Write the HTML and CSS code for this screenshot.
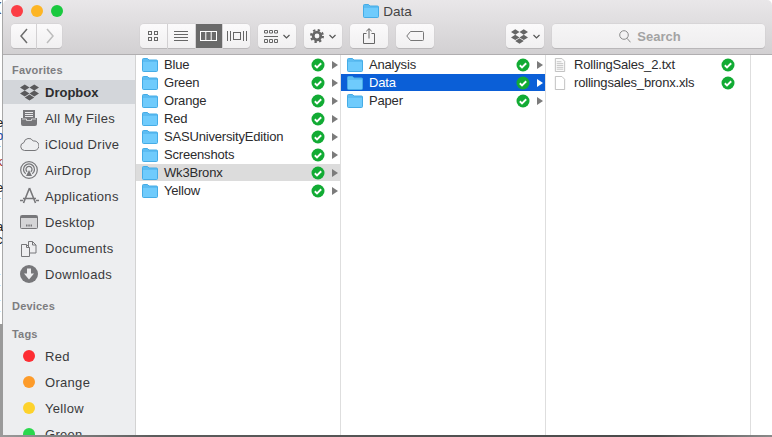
FILE: index.html
```html
<!DOCTYPE html>
<html lang="en">
<head>
    <meta charset="UTF-8">
    <title>Data</title>
    <link rel="stylesheet" href="styles.css">
</head>
<body>
    <svg class="sprite">
        <symbol id="folder" viewBox="0 0 16 14">
            <path d="M.5 12V1.500a1 1 0 0 1 1-1h4l1.500 1.500h7.500a1 1 0 0 1 1 1V12.500a1 1 0 0 1-1 1h-13a1 1 0 0 1-1-1z" fill="#5cbcf2" stroke="#45ace6"/>
            <path d="M1 4h14v8.500a.5.5 0 0 1-.5.5h-13a.5.5 0 0 1-.5-.5z" fill="#6fcbfc"/>
        </symbol>
        <symbol id="check" viewBox="0 0 14 14">
            <circle cx="7" cy="7" r="6.500" fill="#12ab34"/>
            <path d="M3.800 7.300l2.200 2.100 4.200-4.100" fill="none" stroke="#fff" stroke-width="1.900"/>
        </symbol>
        <symbol id="dropbox" viewBox="0 0 24 24">
            <path d="M6 1.800L0 5.600l6 3.800 6-3.800zM18 1.800l-6 3.800 6 3.800 6-3.800zM0 13.300l6 3.800 6-3.800-6-3.800zM18 9.500l-6 3.800 6 3.800 6-3.800zM6 18.400l6 3.800 6-3.800-6-3.800z"/>
        </symbol>
    </svg>

    <div class="desk">
        <div class="behind">
            <div class="frag-top">(</div>
            <div class="frags">
                <span>e</span>
                <span class="frag-blue">b</span>
                <span>r</span>
                <span class="frag-red">k</span>
                <span>&nbsp;</span>
                <span>e</span>
                <span>r</span>
                <span class="frag-red">t</span>
                <span>a</span>
                <span>c</span>
                <span>&nbsp;</span>
                <span class="frag-blue">l</span>
                <span>(</span>
                <span>&nbsp;</span>
                <span>(</span>
                <span class="frag-red">t</span>
            </div>
            <div class="behind-shade"></div>
        </div>

        <div class="window">
            <div class="titlebar">
                <div class="lights">
                    <i class="light close"></i>
                    <i class="light min"></i>
                    <i class="light max"></i>
                </div>
                <div class="title">
                    <svg class="title-folder"><use href="#folder"/></svg>
                    <span>Data</span>
                </div>
                <div class="toolbar">
                    <div class="group nav">
                        <button class="btn seg">
                            <svg width="10" height="16" viewBox="0 0 10 16"><path d="M8 1L2 8l6 7" fill="none" stroke="#6c6c6c" stroke-width="1.500"/></svg>
                        </button>
                        <button class="btn seg">
                            <svg width="10" height="16" viewBox="0 0 10 16"><path d="M2 1l6 7-6 7" fill="none" stroke="#bdbdbd" stroke-width="1.500"/></svg>
                        </button>
                    </div>
                    <div class="group views">
                        <button class="btn seg">
                            <svg width="12" height="12" viewBox="0 0 12 12" fill="none" stroke="#666"><rect x="1.500" y="1.500" width="3" height="3"/><rect x="7.500" y="1.500" width="3" height="3"/><rect x="1.500" y="7.500" width="3" height="3"/><rect x="7.500" y="7.500" width="3" height="3"/></svg>
                        </button>
                        <button class="btn seg">
                            <svg width="16" height="12" viewBox="0 0 16 12" stroke="#666"><path d="M1 1.500h14M1 4.500h14M1 7.500h14M1 10.500h14"/></svg>
                        </button>
                        <button class="btn seg on">
                            <svg width="17" height="12" viewBox="0 0 17 12" fill="none" stroke="#fff"><rect x=".5" y="1.500" width="16" height="9"/><path d="M5.800 1.500v9M11.200 1.500v9"/></svg>
                        </button>
                        <button class="btn seg">
                            <svg width="20" height="12" viewBox="0 0 20 12" fill="none" stroke="#666"><rect x="6.500" y="2.500" width="7" height="7"/><path d="M.5 1v10M3.500 1v10M16.500 1v10M19.500 1v10"/></svg>
                        </button>
                    </div>
                    <button class="btn wide arrange">
                        <svg width="14" height="13" viewBox="0 0 14 13" fill="none" stroke="#666"><path d="M.5 .5h3v2.500h-3zM5.500 .5h3v2.500h-3zM10.500 .5h3v2.500h-3zM0 6.500h14M.5 9.500h3v3h-3zM5.500 9.500h3v3h-3zM10.500 9.500h3v3h-3z"/></svg>
                        <svg class="chev" width="7" height="5" viewBox="0 0 7 5"><path d="M.5 1l3 3 3-3" fill="none" stroke="#555" stroke-width="1.200"/></svg>
                    </button>
                    <button class="btn wide">
                        <svg width="14" height="14" viewBox="0 0 14 14"><circle cx="7" cy="7" r="3.800" fill="none" stroke="#666" stroke-width="2.800"/><circle cx="7" cy="7" r="5.900" fill="none" stroke="#666" stroke-width="2.200" stroke-dasharray="2.300 2.330"/></svg>
                        <svg class="chev" width="7" height="5" viewBox="0 0 7 5"><path d="M.5 1l3 3 3-3" fill="none" stroke="#555" stroke-width="1.200"/></svg>
                    </button>
                    <button class="btn wide">
                        <svg width="12" height="16" viewBox="0 0 12 16" fill="none" stroke="#666"><path d="M3.500 5.500h-3v10h11v-10h-3M6 10.500V.8M3.300 3.200L6 .7l2.700 2.500"/></svg>
                    </button>
                    <button class="btn wide">
                        <svg width="18" height="10" viewBox="0 0 18 10" fill="none" stroke="#777"><path d="M.8 5L4.500.5h12a1 1 0 0 1 1 1v7a1 1 0 0 1-1 1h-12z"/></svg>
                    </button>
                    <button class="btn wide dbx">
                        <svg width="17" height="17" fill="#666"><use href="#dropbox"/></svg>
                        <svg class="chev" width="7" height="5" viewBox="0 0 7 5"><path d="M.5 1l3 3 3-3" fill="none" stroke="#555" stroke-width="1.200"/></svg>
                    </button>
                    <div class="search">
                        <svg width="12" height="13" viewBox="0 0 12 13" fill="none" stroke="#8b8b8b"><circle cx="5" cy="5" r="4.300"/><path d="M8 8.300l3.500 4"/></svg>
                        <span>Search</span>
                    </div>
                </div>
            </div>

            <div class="content">
                <div class="sidebar">
                    <div class="side-head">Favorites</div>
                    <div class="side-item active">
                        <span class="side-icon"><svg width="19" height="19" fill="#59595b"><use href="#dropbox"/></svg></span>
                        <span>Dropbox</span>
                    </div>
                    <div class="side-item">
                        <span class="side-icon">
                            <svg width="16" height="16" viewBox="0 0 16 16"><path d="M2 0h12v8h2v6a2 2 0 0 1-2 2H2a2 2 0 0 1-2-2V8h2z" fill="#77777a"/><path d="M4 2.500h8M4 4.500h8M4 6.500h8" stroke="#e8e8ea"/><path d="M1 9h4.500v1.500h5V9H15" stroke="#e8e8ea" fill="none" stroke-width=".8"/></svg>
                        </span>
                        <span>All My Files</span>
                    </div>
                    <div class="side-item">
                        <span class="side-icon">
                            <svg width="19" height="13" viewBox="0 0 19 13"><path d="M4.500 12.500a4 4 0 0 1-.6-7.900A5 5 0 0 1 13.200 3a4.800 4.800 0 0 1 1.800 9.500z" fill="none" stroke="#77777a"/></svg>
                        </span>
                        <span>iCloud Drive</span>
                    </div>
                    <div class="side-item">
                        <span class="side-icon">
                            <svg width="18" height="18" viewBox="0 0 18 18" fill="none" stroke="#77777a"><circle cx="9" cy="9" r="8.300" stroke-width="1.200"/><path d="M5.700 12.800a5.500 5.500 0 1 1 6.600 0M7.200 10.800a3 3 0 1 1 3.600 0" stroke-width="1.300"/><path d="M9 9l3 6H6z" fill="#77777a" stroke="none"/></svg>
                        </span>
                        <span>AirDrop</span>
                    </div>
                    <div class="side-item">
                        <span class="side-icon">
                            <svg width="19" height="18" viewBox="0 0 19 18" fill="none" stroke="#77777a" stroke-width="1.600"><path d="M9.500 1L3.500 16M9.500 1l6 15M3 11.500h13M0 13.500h3M16 13.500h3"/></svg>
                        </span>
                        <span>Applications</span>
                    </div>
                    <div class="side-item">
                        <span class="side-icon">
                            <svg width="18" height="14" viewBox="0 0 18 14"><rect x=".5" y=".5" width="17" height="13" rx="1" fill="#d5d5d7" stroke="#77777a"/><rect x="1" y="1" width="16" height="2" fill="#77777a"/><path d="M6 10.500h6" stroke="#77777a" stroke-width="2" stroke-dasharray="1.500 .8"/></svg>
                        </span>
                        <span>Desktop</span>
                    </div>
                    <div class="side-item">
                        <span class="side-icon">
                            <svg width="16" height="17" viewBox="0 0 16 17" fill="#eeeef0" stroke="#77777a"><path d="M7.500 1.500h4l3.500 3.500v8h-7.500z"/><path d="M.5 4.500h5l3 3v9h-8z"/><path d="M5.500 4.500v3h3M11.500 1.500v3.500h3.500" fill="none"/></svg>
                        </span>
                        <span>Documents</span>
                    </div>
                    <div class="side-item">
                        <span class="side-icon">
                            <svg width="18" height="18" viewBox="0 0 18 18"><circle cx="9" cy="9" r="9" fill="#77777a"/><path d="M7 3.500h4v5h3l-5 6-5-6h3z" fill="#eeeef0"/></svg>
                        </span>
                        <span>Downloads</span>
                    </div>

                    <div class="side-head devices">Devices</div>
                    <div class="side-head tags">Tags</div>
                    <div class="side-item">
                        <span class="side-icon"><i class="dot red"></i></span>
                        <span>Red</span>
                    </div>
                    <div class="side-item">
                        <span class="side-icon"><i class="dot orange"></i></span>
                        <span>Orange</span>
                    </div>
                    <div class="side-item">
                        <span class="side-icon"><i class="dot yellow"></i></span>
                        <span>Yellow</span>
                    </div>
                    <div class="side-item">
                        <span class="side-icon"><i class="dot green"></i></span>
                        <span>Green</span>
                    </div>
                </div>

                <div class="col">
                    <div class="row"><svg class="icon"><use href="#folder"/></svg><span class="name">Blue</span><svg class="ok"><use href="#check"/></svg><i class="arrow"></i></div>
                    <div class="row"><svg class="icon"><use href="#folder"/></svg><span class="name">Green</span><svg class="ok"><use href="#check"/></svg><i class="arrow"></i></div>
                    <div class="row"><svg class="icon"><use href="#folder"/></svg><span class="name">Orange</span><svg class="ok"><use href="#check"/></svg><i class="arrow"></i></div>
                    <div class="row"><svg class="icon"><use href="#folder"/></svg><span class="name">Red</span><svg class="ok"><use href="#check"/></svg><i class="arrow"></i></div>
                    <div class="row"><svg class="icon"><use href="#folder"/></svg><span class="name">SASUniversityEdition</span><svg class="ok"><use href="#check"/></svg><i class="arrow"></i></div>
                    <div class="row"><svg class="icon"><use href="#folder"/></svg><span class="name">Screenshots</span><svg class="ok"><use href="#check"/></svg><i class="arrow"></i></div>
                    <div class="row path"><svg class="icon"><use href="#folder"/></svg><span class="name">Wk3Bronx</span><svg class="ok"><use href="#check"/></svg><i class="arrow"></i></div>
                    <div class="row"><svg class="icon"><use href="#folder"/></svg><span class="name">Yellow</span><svg class="ok"><use href="#check"/></svg><i class="arrow"></i></div>
                </div>

                <div class="col">
                    <div class="row"><svg class="icon"><use href="#folder"/></svg><span class="name">Analysis</span><svg class="ok"><use href="#check"/></svg><i class="arrow"></i></div>
                    <div class="row selected"><svg class="icon"><use href="#folder"/></svg><span class="name">Data</span><svg class="ok"><use href="#check"/></svg><i class="arrow"></i></div>
                    <div class="row"><svg class="icon"><use href="#folder"/></svg><span class="name">Paper</span><svg class="ok"><use href="#check"/></svg><i class="arrow"></i></div>
                </div>

                <div class="col files">
                    <div class="row">
                        <svg class="icon" viewBox="0 0 16 15"><path d="M3 .5h7l3 3v11H3z" fill="#fafafa" stroke="#bcbcbc"/><path d="M4.500 4h5M4.500 6h7M4.500 8h7M4.500 10h7M4.500 12h7" stroke="#c4c4c4"/></svg>
                        <span class="name">RollingSales_2.txt</span><svg class="ok"><use href="#check"/></svg>
                    </div>
                    <div class="row">
                        <svg class="icon" viewBox="0 0 16 15"><path d="M3 .5h7l3 3v11H3z" fill="#fff" stroke="#bcbcbc"/></svg>
                        <span class="name">rollingsales_bronx.xls</span><svg class="ok"><use href="#check"/></svg>
                    </div>
                </div>

                <div class="col-blank"></div>
            </div>
        </div>
    </div>
    <div class="behind-bottom"></div>
</body>
</html>
```

FILE: styles.css
```css
*{
    margin: 0;
    padding: 0;
    box-sizing: border-box;
}
body{
    width: 772px;
    height: 437px;
    overflow: hidden;
    background: #fff;
    font-family: "Liberation Sans", Arial, sans-serif;
    font-size: 13px;
    color: #2b2b2d;
}
.sprite{
    display: none;
}
.desk{
    display: flex;
    height: 435px;
}

/* page behind the finder window */
.behind{
    width: 3px;
    display: flex;
    flex-direction: column;
    overflow: hidden;
    background: #fff;
    box-shadow: inset -1px 0 0 #a8a8a8;
    color: #222;
    line-height: 13px;
}
.frag-top{
    height: 116px;
    margin-left: -3px;
}
.frags{
    display: flex;
    flex-direction: column;
    height: 208px;
}
.frags span{
    display: block;
    height: 13px;
    margin-left: -4px;
}
.frags .frag-blue{
    color: #1f4fb0;
}
.frags .frag-red{
    color: #a52a1a;
}
.behind-shade{
    flex: 1;
    background: #9a9a9a;
}
.behind-bottom{
    height: 2px;
    background: linear-gradient(to right, #9a9a9a, #5c5c5c 20%, #4a4a4a 85%, #8a8a8a);
}

/* window */
.window{
    position: relative;
    flex: 1;
    min-width: 0;
    display: flex;
    flex-direction: column;
    border-radius: 5px 5px 0 0;
    overflow: hidden;
}
.titlebar{
    height: 55px;
    display: flex;
    flex-direction: column;
    background: linear-gradient(#e9e7e9, #d2d0d2);
    border-bottom: 1px solid #b0aeb0;
}
/* traffic lights sit over the titlebar */
.lights{
    display: flex;
    gap: 8px;
    position: absolute;
    left: 8px;
    top: 5px;
}
.light{
    width: 12px;
    height: 12px;
    border-radius: 50%;
}
.close{
    background: #fc3d45;
}
.min{
    background: #fdb524;
}
.max{
    background: #1ac93f;
}
.title{
    height: 24px;
    display: flex;
    align-items: center;
    justify-content: center;
    gap: 4px;
    color: #444;
    font-size: 13.5px;
    padding-bottom: 2px;
}
.title-folder{
    width: 16px;
    height: 14px;
}
.toolbar{
    height: 24px;
    display: flex;
    align-items: stretch;
    padding: 0 7px 0 8px;
}
.btn{
    display: flex;
    align-items: center;
    justify-content: center;
    border: 0;
    font: inherit;
    background: linear-gradient(#fbfafb, #f1f0f1);
    box-shadow: 0 1px 0 #b9b7b9, 0 0 0 .5px #d0ced0;
    border-radius: 4px;
}
.group{
    display: flex;
    gap: 1px;
}
.seg{
    flex: 1;
    border-radius: 0;
}
.seg:first-child{
    border-radius: 4px 0 0 4px;
}
.seg:last-child{
    border-radius: 0 4px 4px 0;
}
.seg.on{
    background: #6a6a6a;
    box-shadow: none;
}
.nav{
    width: 51px;
    margin-right: 78px;
}
.views{
    width: 110px;
    margin-right: 8px;
}
.wide{
    width: 38px;
    margin-right: 8px;
    gap: 5px;
}
.dbx{
    margin-left: 64px;
}
.search{
    flex: 1;
    display: flex;
    align-items: center;
    justify-content: center;
    gap: 6px;
    padding-right: 17px;
    color: #a3a3a3;
    font-weight: bold;
    background: linear-gradient(#f6f5f6, #efeeef);
    box-shadow: 0 1px 0 #b9b7b9, 0 0 0 .5px #d0ced0;
    border-radius: 4px;
}

.content{
    flex: 1;
    min-height: 0;
    display: flex;
    background: #fff;
}

/* sidebar */
.sidebar{
    width: 133px;
    flex: none;
    overflow: hidden;
    background: #edeef0;
    border-right: 1px solid #d3d3d3;
    padding-top: 6px;
    letter-spacing: .3px;
    color: #3a3a3c;
}
.side-head{
    height: 18px;
    line-height: 18px;
    margin-bottom: 1px;
    padding-left: 9px;
    font-size: 11px;
    font-weight: bold;
    letter-spacing: .2px;
    color: #7d7d80;
}
.devices{
    margin-top: 11px;
}
.tags{
    margin-top: 10px;
}
.side-item{
    height: 24px;
    margin-bottom: 2px;
    display: flex;
    align-items: center;
    gap: 6px;
    padding-left: 16px;
}
.side-item.active{
    background: #d3d6da;
    font-weight: bold;
    letter-spacing: 0;
    color: #2d2d2f;
}
.side-icon{
    width: 20px;
    display: flex;
    justify-content: center;
}
.dot{
    width: 12px;
    height: 12px;
    border-radius: 50%;
}
.red{
    background: #fd2d33;
}
.orange{
    background: #fd9b2a;
}
.yellow{
    background: #fdd22c;
}
.green{
    background: #2bd84d;
}

/* columns */
.col{
    width: 205px;
    flex: none;
    padding-top: 1px;
    border-right: 1px solid #dedede;
}
.col-blank{
    flex: 1;
}
.row{
    height: 17px;
    margin-bottom: 1px;
    display: flex;
    align-items: center;
    padding-left: 6px;
    padding-right: 2px;
}
.icon{
    width: 16px;
    height: 14px;
    flex: none;
    margin-right: 6px;
}
.name{
    flex: 1;
    white-space: nowrap;
    letter-spacing: -.18px;
}
.ok{
    width: 14px;
    height: 14px;
    flex: none;
}
.arrow{
    width: 0;
    height: 0;
    margin-left: 7px;
    border-left: 6px solid #7b7b7b;
    border-top: 4px solid transparent;
    border-bottom: 4px solid transparent;
}
.path{
    background: #dcdcdc;
}
.selected{
    background: #0b5fd7;
    color: #fff;
}
.selected .arrow{
    border-left-color: #fff;
}
.files .row{
    padding-right: 15px;
}
```
